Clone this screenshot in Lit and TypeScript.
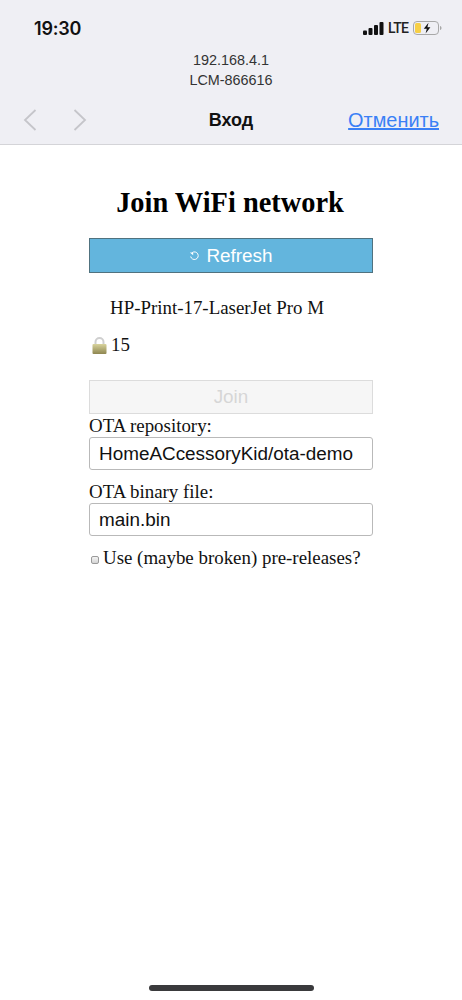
import { LitElement, html, css } from "lit";
import { customElement } from "lit/decorators.js";

@customElement("app-root")
export class AppRoot extends LitElement {
  static styles = css`
    :host { display: block; width: 462px; height: 1000px; position: relative; overflow: hidden; background: #fff; font-family: "Liberation Serif", serif; color: #000; }
    .top { background: #efeff4; height: 144px; border-bottom: 1px solid #d4d4d8; box-sizing: content-box; font-family: "Liberation Sans", Arial, sans-serif; display: flex; flex-direction: column; }
    .status { height: 50px; display: flex; justify-content: space-between; align-items: center; padding: 6px 20px 0 34px; box-sizing: border-box; flex: none; }
    .time { font-size: 18px; font-weight: 600; color: #111; font-family: Inter, "Liberation Sans", sans-serif; letter-spacing: -0.2px; }
    .sys { display: flex; align-items: center; gap: 4px; }
    .lte { font: 500 14px Roboto, sans-serif; color: #222; letter-spacing: -0.8px; margin-right: 1px; }
    .url { text-align: center; font-size: 14.4px; line-height: 20px; color: #333; height: 40px; flex: none; }
    .nav { display: flex; align-items: center; height: 54px; padding: 6px 23px 0; box-sizing: border-box; position: relative; }
    .arrows { display: flex; gap: 36px; flex: none; }
    .title-nav { position: absolute; left: 0; right: 0; text-align: center; font-size: 18px; font-weight: 600; color: #111; }
    .cancel { margin-left: auto; color: #3a80f6; font-size: 19.9px; text-decoration: underline; text-decoration-thickness: 2px; position: relative; }
    .main { width: 284px; margin: 0 auto 0 89px; display: flex; flex-direction: column; }
    h1 { font-size: 28.4px; line-height: 34px; font-weight: 700; text-align: center; margin: 41px 2px 18px 0; white-space: nowrap; }
    .refresh { height: 35px; box-sizing: border-box; background: #63b5dd; border: 1px solid #50727f; color: #fff; font: 18.9px "Liberation Sans", sans-serif; display: flex; align-items: center; justify-content: center; gap: 6px; }
    .ssid { font-size: 18.9px; line-height: 22px; margin: 24px 0 0 21px; white-space: nowrap; color: #111; height: 22px; }
    .signal { display: flex; align-items: center; gap: 4px; font-size: 18.9px; line-height: 22px; margin: 15px 0 0 3px; height: 22px; color: #111; }
    .join { height: 34px; box-sizing: border-box; margin-top: 24px; background: #f6f6f6; border: 1px solid #dcdcdc; color: #d6d6d6; font: 18.9px "Liberation Sans", sans-serif; display: flex; align-items: center; justify-content: center; }
    label { font-size: 18.9px; line-height: 22px; color: #111; display: block; white-space: nowrap; }
    .l1 { margin-top: 1px; }
    .l2 { margin-top: 11px; }
    .field { height: 33px; box-sizing: border-box; border: 1px solid #b9b9b9; border-radius: 3px; background: #fff; padding: 0 9px; font: 18.9px/31px "Liberation Sans", sans-serif; color: #111; white-space: nowrap; }
    .check { display: flex; align-items: center; font-size: 18.9px; line-height: 22px; color: #111; margin-top: 11px; white-space: nowrap; }
    .box { width: 8px; height: 8px; box-sizing: border-box; border: 1px solid #9a9a9a; border-radius: 2px; background: linear-gradient(#f4f4f4, #d4d4d4); margin: 3px 4px 0 2px; flex: none; }
    .home { position: absolute; left: 149px; top: 985px; width: 165px; height: 6px; border-radius: 3px; background: #3a3a3c; }
  `;

  render() {
    return html`
      <div class="top">
        <div class="status">
          <span class="time">19:30</span>
          <span class="sys">
            <svg width="21" height="13" viewBox="0 0 21 13"><g fill="#111"><rect x="0" y="8.500" width="4" height="4.500" rx="1"/><rect x="5.500" y="6" width="4" height="7" rx="1"/><rect x="11" y="3" width="4" height="10" rx="1"/><rect x="16.500" y="0" width="4" height="13" rx="1"/></g></svg>
            <span class="lte">LTE</span>
            <svg width="29" height="14" viewBox="0 0 29 14"><rect x=".5" y=".5" width="25" height="13" rx="3.500" fill="none" stroke="#a8a8a8"/><rect x="2" y="2" width="6" height="10" rx="1.500" fill="#f7cf45"/><path d="M15.500 1.800 10.800 7.800h3l-1.200 4.600 4.800-6.200h-3z" fill="#111"/><path d="M27 5v4c1-.3 1.500-1 1.500-2S28 5.300 27 5z" fill="#a8a8a8"/></svg>
          </span>
        </div>
        <div class="url">192.168.4.1<br />LCM-866616</div>
        <div class="nav">
          <div class="title-nav">Вход</div>
          <div class="arrows">
            <svg width="14" height="22" viewBox="0 0 14 22"><path d="M12.500 1 2 11l10.500 10" fill="none" stroke="#c5c5ca" stroke-width="1.800"/></svg>
            <svg width="14" height="22" viewBox="0 0 14 22"><path d="M1.500 1 12 11 1.500 21" fill="none" stroke="#c5c5ca" stroke-width="1.800"/></svg>
          </div>
          <span class="cancel">Отменить</span>
        </div>
      </div>
      <div class="main">
        <h1>Join WiFi network</h1>
        <div class="refresh">
          <svg width="11" height="11" viewBox="0 0 11 11"><path d="M3.200 2.600A3.800 3.800 0 1 1 1.700 6.500" fill="none" stroke="#fff" stroke-width="1"/><path d="M0.800 2.400h3.400v2.800z" fill="#fff"/></svg>
          <span>Refresh</span>
        </div>
        <div class="ssid">HP-Print-17-LaserJet Pro M</div>
        <div class="signal">
          <svg width="15" height="18" viewBox="0 0 15 18">
            <defs><linearGradient id="g" x1="0" x2="0" y1="0" y2="1"><stop offset="0" stop-color="#d8d39c"/><stop offset="1" stop-color="#8e8650"/></linearGradient></defs>
            <path d="M3.500 9V6a4 4 0 0 1 8 0v3" fill="none" stroke="#cfcfcf" stroke-width="2"/>
            <rect x="0.500" y="8" width="14" height="10" rx="1" fill="url(#g)"/>
          </svg>
          <span>15</span>
        </div>
        <div class="join">Join</div>
        <label class="l1">OTA repository:</label>
        <div class="field">HomeACcessoryKid/ota-demo</div>
        <label class="l2">OTA binary file:</label>
        <div class="field">main.bin</div>
        <div class="check"><span class="box"></span>Use (maybe broken) pre-releases?</div>
      </div>
      <div class="home"></div>
    `;
  }
}
